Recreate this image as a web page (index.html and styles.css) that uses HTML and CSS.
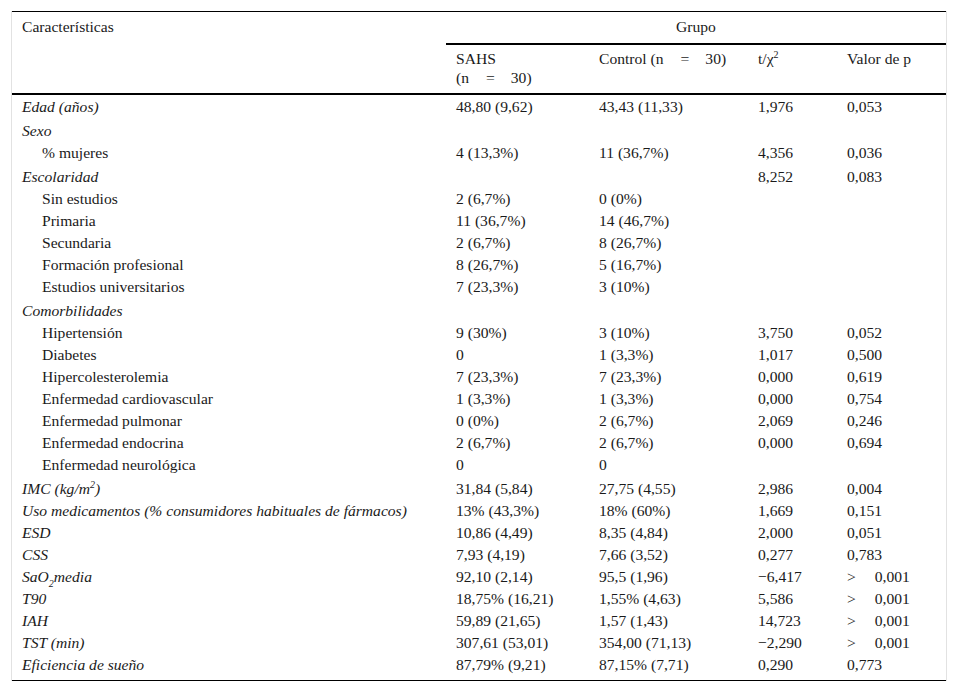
FILE: index.html
```html
<!DOCTYPE html>
<html lang="es">
<head>
<meta charset="utf-8">
<title>Tabla</title>
<link rel="stylesheet" href="styles.css">
</head>
<body>
<div class="wrap">
<table class="tbl">
<colgroup>
<col class="c1"><col class="c2"><col class="c3"><col class="c4"><col class="c5">
</colgroup>
<thead>
<tr class="h1">
<th rowspan="2" class="hcar">Características</th>
<th colspan="4" class="hgrp">Grupo</th>
</tr>
<tr class="h2">
<th>SAHS<br>(n<span class="sp">=</span>30)</th>
<th>Control (n<span class="sp">=</span>30)</th>
<th>t/χ<sup>2</sup></th>
<th>Valor de p</th>
</tr>
</thead>
<tbody>
<tr><td class="it">Edad (años)</td><td>48,80 (9,62)</td><td>43,43 (11,33)</td><td>1,976</td><td>0,053</td></tr>
<tr class="sec"><td class="it">Sexo</td><td></td><td></td><td></td><td></td></tr>
<tr><td class="ind">% mujeres</td><td>4 (13,3%)</td><td>11 (36,7%)</td><td>4,356</td><td>0,036</td></tr>
<tr class="sec"><td class="it">Escolaridad</td><td></td><td></td><td>8,252</td><td>0,083</td></tr>
<tr><td class="ind">Sin estudios</td><td>2 (6,7%)</td><td>0 (0%)</td><td></td><td></td></tr>
<tr><td class="ind">Primaria</td><td>11 (36,7%)</td><td>14 (46,7%)</td><td></td><td></td></tr>
<tr><td class="ind">Secundaria</td><td>2 (6,7%)</td><td>8 (26,7%)</td><td></td><td></td></tr>
<tr><td class="ind">Formación profesional</td><td>8 (26,7%)</td><td>5 (16,7%)</td><td></td><td></td></tr>
<tr><td class="ind">Estudios universitarios</td><td>7 (23,3%)</td><td>3 (10%)</td><td></td><td></td></tr>
<tr class="sec"><td class="it">Comorbilidades</td><td></td><td></td><td></td><td></td></tr>
<tr><td class="ind">Hipertensión</td><td>9 (30%)</td><td>3 (10%)</td><td>3,750</td><td>0,052</td></tr>
<tr><td class="ind">Diabetes</td><td>0</td><td>1 (3,3%)</td><td>1,017</td><td>0,500</td></tr>
<tr><td class="ind">Hipercolesterolemia</td><td>7 (23,3%)</td><td>7 (23,3%)</td><td>0,000</td><td>0,619</td></tr>
<tr><td class="ind">Enfermedad cardiovascular</td><td>1 (3,3%)</td><td>1 (3,3%)</td><td>0,000</td><td>0,754</td></tr>
<tr><td class="ind">Enfermedad pulmonar</td><td>0 (0%)</td><td>2 (6,7%)</td><td>2,069</td><td>0,246</td></tr>
<tr><td class="ind">Enfermedad endocrina</td><td>2 (6,7%)</td><td>2 (6,7%)</td><td>0,000</td><td>0,694</td></tr>
<tr><td class="ind">Enfermedad neurológica</td><td>0</td><td>0</td><td></td><td></td></tr>
<tr class="sec"><td class="it">IMC (kg/m<sup>2</sup>)</td><td>31,84 (5,84)</td><td>27,75 (4,55)</td><td>2,986</td><td>0,004</td></tr>
<tr><td class="it">Uso medicamentos (% consumidores habituales de fármacos)</td><td>13% (43,3%)</td><td>18% (60%)</td><td>1,669</td><td>0,151</td></tr>
<tr><td class="it">ESD</td><td>10,86 (4,49)</td><td>8,35 (4,84)</td><td>2,000</td><td>0,051</td></tr>
<tr><td class="it">CSS</td><td>7,93 (4,19)</td><td>7,66 (3,52)</td><td>0,277</td><td>0,783</td></tr>
<tr><td class="it">SaO<sub>2</sub>media</td><td>92,10 (2,14)</td><td>95,5 (1,96)</td><td>−6,417</td><td>&gt;<span class="gt"></span>0,001</td></tr>
<tr><td class="it">T90</td><td>18,75% (16,21)</td><td>1,55% (4,63)</td><td>5,586</td><td>&gt;<span class="gt"></span>0,001</td></tr>
<tr><td class="it">IAH</td><td>59,89 (21,65)</td><td>1,57 (1,43)</td><td>14,723</td><td>&gt;<span class="gt"></span>0,001</td></tr>
<tr><td class="it">TST (min)</td><td>307,61 (53,01)</td><td>354,00 (71,13)</td><td>−2,290</td><td>&gt;<span class="gt"></span>0,001</td></tr>
<tr class="last"><td class="it">Eficiencia de sueño</td><td>87,79% (9,21)</td><td>87,15% (7,71)</td><td>0,290</td><td>0,773</td></tr>
</tbody>
</table>
</div>
</body>
</html>
```
FILE: styles.css
```css
html, body {
  margin: 0;
  padding: 0;
  background: #fff;
}
body {
  font-family: "Liberation Serif", "Times New Roman", serif;
  font-size: 15.6px;
  color: #1a1a1a;
}
.wrap {
  margin: 11px 10px 0 11px;
  border-left: 1px solid #e2e2e2;
  border-right: 1px solid #e2e2e2;
}
.tbl {
  width: 100%;
  border-collapse: collapse;
  border-top: 1px solid #000;
  border-bottom: 1px solid #000;
  table-layout: fixed;
}
.c1 { width: 434px; }
.c2 { width: 143px; }
.c3 { width: 159px; }
.c4 { width: 89px; }
.c5 { width: auto; }
th, td {
  text-align: left;
  font-weight: normal;
  vertical-align: top;
  padding: 1.5px 10px 1.5px 10px;
  line-height: 19px;
  white-space: nowrap;
}
.h1 th {
  padding-top: 5px;
  padding-bottom: 7px;
}
.hgrp {
  text-align: center;
  border-bottom: 2px solid #000;
}
.hcar {
  border-bottom: 2px solid #000;
}
.h2 th {
  padding-top: 4px;
  padding-bottom: 6px;
  border-bottom: 2px solid #000;
}
.sp {
  margin: 0 16px 0 17px;
}
.gt {
  display: inline-block;
  width: 19px;
}
.it { font-style: italic; }
.ind { padding-left: 30px; }
.sec td { padding-top: 3.5px; }
.last td { padding-bottom: 6.5px; }
sup, sub {
  font-size: 10px;
  line-height: 0;
}
sup { vertical-align: 6px; }
sub { vertical-align: -5px; }
```
